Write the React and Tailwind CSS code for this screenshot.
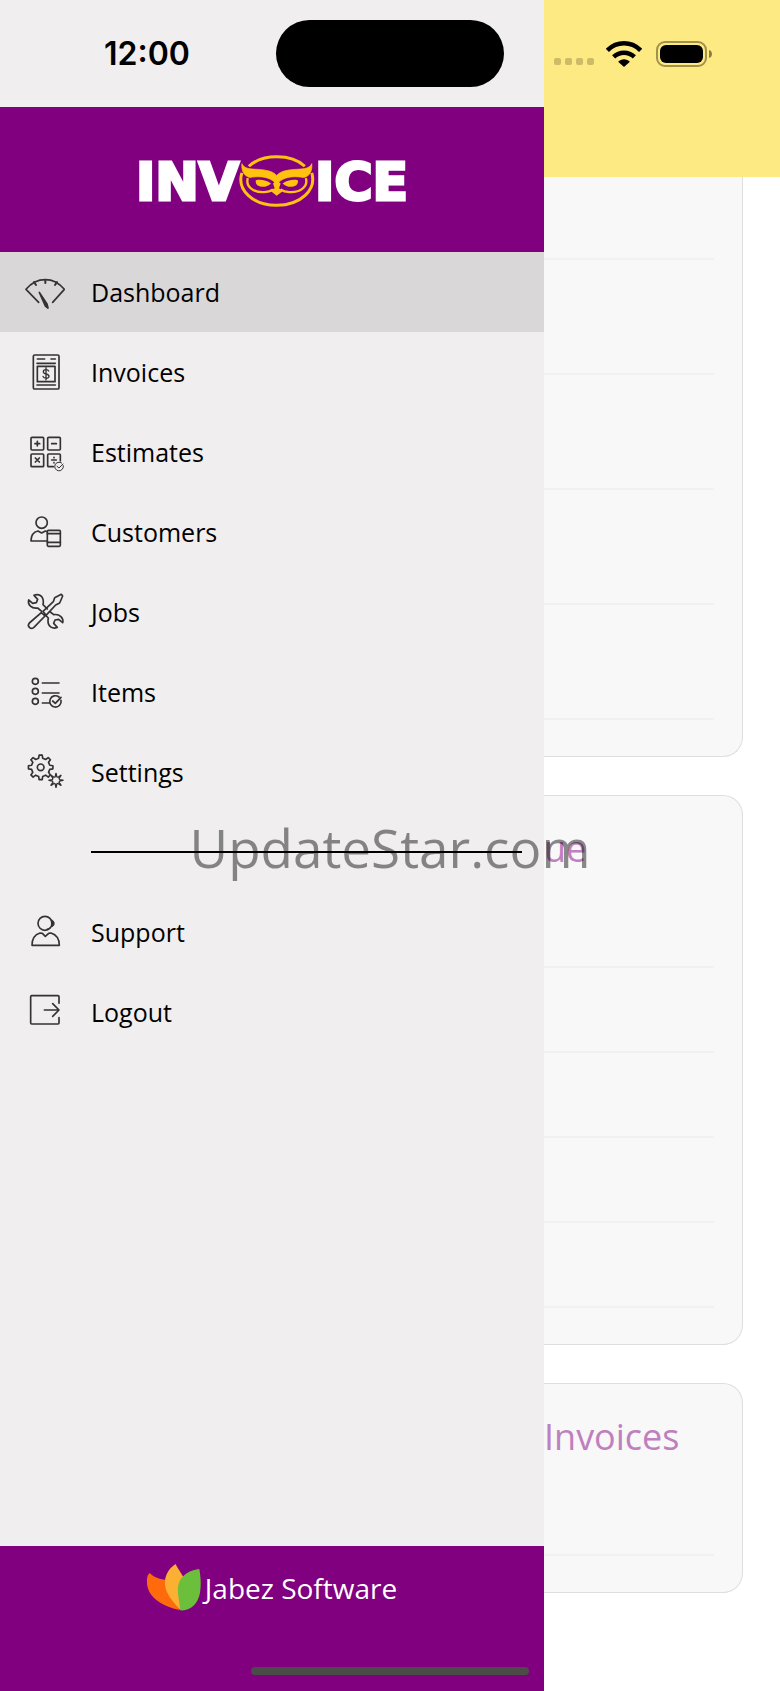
import React from "react";

// outline of a cog, teeth are cut between the two radii
function gearPath(cx, cy, outer, inner, teeth, flat) {
  const step = (Math.PI * 2) / teeth;
  const points = [];
  for (let i = 0; i < teeth; i++) {
    const a = i * step - Math.PI / 2;
    const corners = [
      [inner, a - step * 0.28],
      [outer, a - step * flat],
      [outer, a + step * flat],
      [inner, a + step * 0.28],
    ];
    corners.forEach(([r, t]) => {
      points.push(`${(cx + r * Math.cos(t)).toFixed(1)} ${(cy + r * Math.sin(t)).toFixed(1)}`);
    });
  }
  return `M${points.join("L")}Z`;
}

function Icon({ children }) {
  return (
    <svg
      viewBox="0 0 120 120"
      className="size-10 shrink-0 text-[#333]"
      fill="none"
      stroke="currentColor"
      strokeWidth="5"
      strokeLinecap="round"
      strokeLinejoin="round"
      aria-hidden="true"
    >
      {children}
    </svg>
  );
}

const menu = [
  {
    name: "Dashboard",
    icon: (
      <Icon>
        <path d="M41 91 3 52C18 34 38 23 61 23s42 11 57 29L83 91" />
        <path d="M61 24v9M27 30l6 9M96 30l-6 9" strokeWidth="6" />
        <path d="M43 61 61 102l8 6-3-12Z" fill="currentColor" />
      </Icon>
    ),
  },
  {
    name: "Invoices",
    icon: (
      <Icon>
        <rect x="25" y="9" width="77" height="102" rx="4" />
        <path d="M37 21h22M78 21h13M36 34h55M36 99h55" />
        <rect x="37" y="43" width="53" height="46" />
        <path d="M71 57c-2-5-16-6-16 2 0 9 17 5 17 14 0 8-16 7-18 0M63 47v37" strokeWidth="4" />
      </Icon>
    ),
  },
  {
    name: "Estimates",
    icon: (
      <Icon>
        <rect x="18" y="16" width="38" height="38" rx="3" />
        <rect x="68" y="16" width="38" height="38" rx="3" />
        <rect x="18" y="66" width="38" height="38" rx="3" />
        <path d="M85 104H71a3 3 0 0 1-3-3V69a3 3 0 0 1 3-3h32a3 3 0 0 1 3 3v18" />
        <path d="M37 28v14M30 35h14M80 35h14M31 78l12 12M43 78 31 90M80 84h14M87 76v1M87 92v1" strokeWidth="5" />
        <path d="M110 93a13 13 0 1 0 5 8M96 103l6 5 12-12" strokeWidth="3" />
      </Icon>
    ),
  },
  {
    name: "Customers",
    icon: (
      <Icon>
        <circle cx="50" cy="32" r="17" />
        <path d="M67 87H18c0-16 7-27 21-30l11 6 11-6 6 2" />
        <rect x="67" y="55" width="39" height="48" rx="3" />
        <path d="M67 65h39M67 91h39" />
      </Icon>
    ),
  },
  {
    name: "Jobs",
    icon: (
      <Icon>
        <path d="M27 10C39 4 56 10 55 32l-1 6 13 13M27 10l11 12-4 10-11 2-12-10C7 38 20 51 38 48l12 10" />
        <path d="M97 106C85 112 68 106 69 84l1-6-8-8M97 106 86 94l4-10 11-2 12 10c4-14-9-27-27-24L76 60" />
        <path d="M49 62 13 93c-8 9 4 21 13 14l34-35ZM54 58l31-29 4-12 20-10 4 5-9 21-12 6-29 31Z" />
      </Icon>
    ),
  },
  {
    name: "Items",
    icon: (
      <Icon>
        <circle cx="31" cy="28" r="9" />
        <circle cx="31" cy="58" r="9" />
        <circle cx="31" cy="88" r="9" />
        <path d="M52 33h50M52 63h50M52 93h22" />
        <path d="M102 75a17 17 0 1 0 6 10M83 87l8 7 17-18" />
      </Icon>
    ),
  },
  {
    name: "Settings",
    icon: (
      <Icon>
        <path d={gearPath(47, 46, 37, 28, 8, 0.16)} />
        <circle cx="47" cy="46" r="10" />
        <path d={gearPath(93, 85, 21, 11, 8, 0.02)} strokeWidth="4" />
      </Icon>
    ),
  },
];

const extra = [
  {
    name: "Support",
    icon: (
      <Icon>
        <circle cx="60" cy="34" r="21" />
        <path d="M80 24c9 1 11 18 1 20ZM80 43c-4 7-8 8-16 9" fill="currentColor" strokeWidth="3" />
        <path d="M21 100c0-19 8-32 24-37l7 1 9 9 10-9 7-1c16 5 25 18 25 37Z" />
      </Icon>
    ),
  },
  {
    name: "Logout",
    icon: (
      <Icon>
        <path d="M102 34V14a3 3 0 0 0-3-3H20a3 3 0 0 0-3 3v79a3 3 0 0 0 3 3h79a3 3 0 0 0 3-3V77" />
        <path d="M58 54h44M83 35l19 19-19 19" />
      </Icon>
    ),
  },
];

function MenuItem({ item, active }) {
  return (
    <li>
      <a
        href="#"
        aria-current={active ? "page" : undefined}
        className={`flex h-20 items-center gap-[26px] pl-[25px] text-[25px] leading-8 text-black ${active ? "bg-[#d9d7d8]" : ""}`}
      >
        {item.icon}
        <span>{item.name}</span>
      </a>
    </li>
  );
}

function Owl() {
  return (
    <svg viewBox="390 40 228 160" className="h-[53px] w-[76px] shrink-0" fill="none" stroke="#ffc20e" aria-hidden="true">
      <path d="M419 74C460 36 547 36 588 74" strokeWidth="9" />
      <path d="M398 94C382 145 430 192 503 192s121-47 106-98" strokeWidth="9" />
      <path
        d="M398 66c6 14 20 16 42 17 27 1 52 5 63 19 11-14 36-18 63-19 22-1 37-3 43-17 2 22-6 38-24 42-25-4-52-4-71 10l-11 12-11-12c-19-14-46-14-71-10-17-6-25-20-23-42Z"
        fill="#ffc20e"
        strokeWidth="2"
      />
      <path d="M416 110c-8 26 18 44 50 42 12-1 20-4 26-8M591 110c8 26-18 44-50 42-12-1-20-4-26-8" strokeWidth="7" />
      <path d="M440 116c16-3 32 0 46 10-8 8-18 11-28 10-13-2-20-9-18-20ZM567 116c-16-3-32 0-46 10 8 8 18 11 28 10 13-2 20-9 18-20Z" fill="#ffc20e" stroke="none" />
      <path d="M492 126l5 14-13 8 19 15 20-15-13-8 5-14-12-8Z" fill="#ffc20e" stroke="none" />
    </svg>
  );
}

function Drawer() {
  return (
    <aside className="flex w-[544px] shrink-0 flex-col bg-[#f0eeef]">
      <div className="flex h-[107px] items-center justify-between pr-10 pl-[104px]">
        <time className="font-[Inter] text-[32px] leading-10 font-semibold text-black">12:00</time>
        <div className="h-[67px] w-[228px] rounded-full bg-black"></div>
      </div>

      <div
        className="flex h-[145px] items-center justify-center bg-[#800080] pt-1 font-['DejaVu_Sans',sans-serif] text-[52px] leading-[60px] font-bold text-white [-webkit-text-stroke:3px_white]"
      >
        <span>INV</span>
        <Owl />
        <span>ICE</span>
      </div>

      <nav>
        <ul>
          {menu.map((item, i) => (
            <MenuItem key={item.name} item={item} active={i === 0} />
          ))}
        </ul>
        <div className="flex h-20 items-center pr-[22px] pl-[91px]">
          <hr className="w-full border-t-2 border-black" />
        </div>
        <ul>
          {extra.map((item) => (
            <MenuItem key={item.name} item={item} />
          ))}
        </ul>
      </nav>

      <footer className="mt-auto flex h-[145px] flex-col justify-between bg-[#800080] pt-[18px] pb-4">
        <div className="flex items-center justify-center gap-1 text-white">
          <svg viewBox="0 0 161 140" className="h-[47px] w-[54px]" aria-hidden="true">
            <path d="M8 27c16 16 32 18 46 20l43 90C40 126-12 92 2 34Z" fill="#ff6a0d" />
            <path d="M85 0c-24 16-36 42-30 70 6 26 28 48 43 66l14-90C106 32 92 14 85 0Z" fill="#fbb034" />
            <path d="M156 15c-44 6-64 30-64 62 0 22 7 42 6 61 30 4 54-18 60-52 4-25 2-48-2-71Z" fill="#6cbf3a" />
          </svg>
          <span className="text-[28px] leading-9">Jabez Software</span>
        </div>
        <div className="mr-[15px] h-2 w-[278px] self-end rounded-full bg-[#4b4b48]"></div>
      </footer>
    </aside>
  );
}

function StatusIcons() {
  return (
    <div className="flex h-[107px] items-center pl-[10px]">
      <svg viewBox="0 0 40 26" className="h-[26px] w-10" fill="#cdbb67" aria-hidden="true">
        <rect x="0" y="17" width="7" height="7" rx="2" />
        <rect x="11" y="17" width="7" height="7" rx="2" />
        <rect x="22" y="17" width="7" height="7" rx="2" />
        <rect x="33" y="17" width="7" height="7" rx="2" />
      </svg>
      <svg viewBox="0 0 104 75" className="ml-3 h-[26px] w-9" fill="none" stroke="#000" strokeWidth="13" aria-hidden="true">
        <path d="M4 27C32 0 72 0 100 27" />
        <path d="M22 46c17-16 43-16 60 0" />
        <path d="M35 60c9-10 25-10 34 0L52 75Z" fill="#000" stroke="none" />
      </svg>
      <svg viewBox="0 0 58 26" className="ml-[14px] h-[26px] w-[58px]" aria-hidden="true">
        <rect x="1" y="1" width="49" height="24" rx="8" fill="none" stroke="#a1914b" strokeWidth="2" />
        <rect x="4" y="4" width="43" height="18" rx="6" fill="#000" />
        <path d="M53 9c4 1 4 7 0 8Z" fill="#8d7f42" />
      </svg>
    </div>
  );
}

function Card({ title, rows, rowClass, className }) {
  return (
    <section className={`mr-[37px] border border-l-0 border-[#dedede] bg-[#f8f8f8] pr-7 pb-9 ${className}`}>
      {title && <h2 className="h-[87px] overflow-hidden pt-7 text-4xl leading-[50px] text-[#bf80bf]">{title}</h2>}
      {Array.from({ length: rows }).map((_, i) => (
        <div key={i} className={`border-b-2 border-[#f1f1f1] ${rowClass}`}></div>
      ))}
    </section>
  );
}

export default function App() {
  return (
    <div className="relative flex min-h-screen bg-white font-['Open_Sans',sans-serif]">
      <Drawer />

      <main className="min-w-0 flex-1">
        <header className="h-[177px] bg-[#feea83]">
          <StatusIcons />
        </header>
        <div className="flex flex-col gap-[38px]">
          <Card rows={5} className="rounded-br-[20px] border-t-0 -mt-8 [clip-path:inset(32px_0_0_0)]" rowClass="h-[115px]" />
          <Card title="ue" rows={5} className="rounded-r-[20px]" rowClass="h-[85px]" />
          <Card title="Invoices" rows={1} className="rounded-r-[20px]" rowClass="h-[85px]" />
        </div>
      </main>

      <div className="pointer-events-none absolute inset-x-0 top-[812px] text-center text-[53px] leading-[72px] text-black/45">
        UpdateStar.com
      </div>
    </div>
  );
}
